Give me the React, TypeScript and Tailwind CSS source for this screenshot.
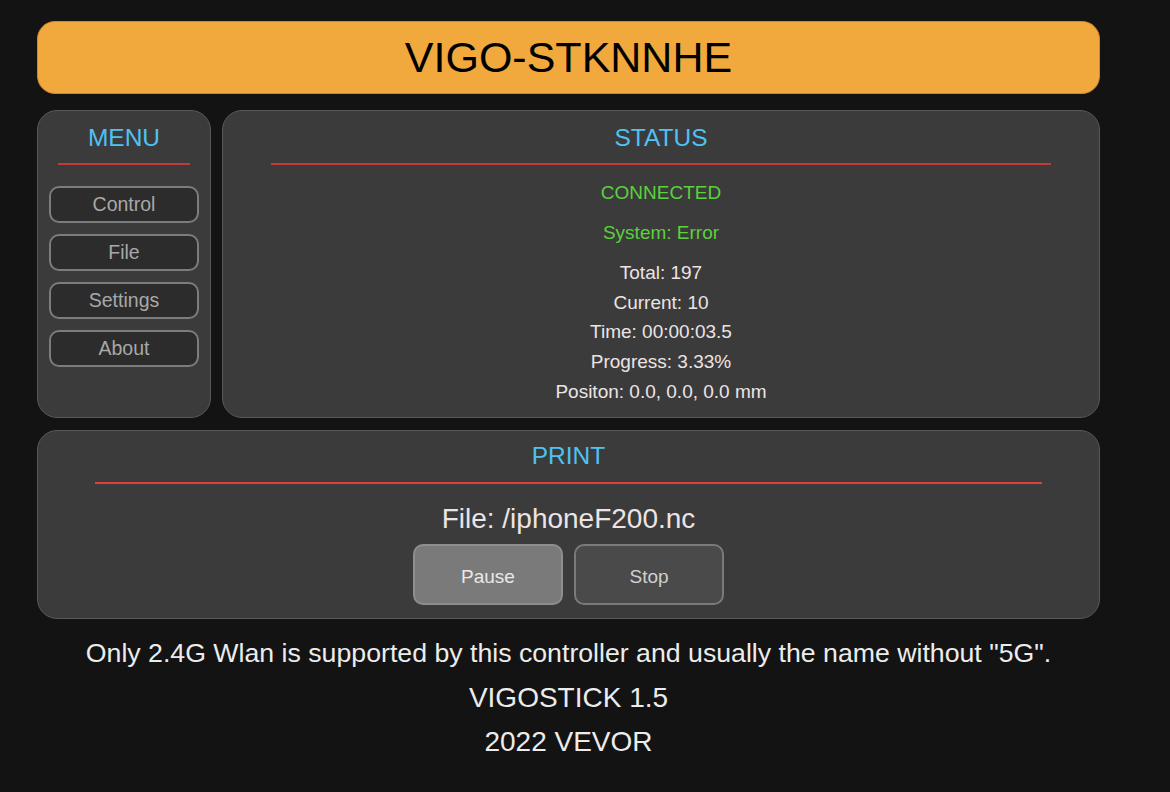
export default function App() {
  const menu = ["Control", "File", "Settings", "About"];
  const stats = [
    "Total: 197",
    "Current: 10",
    "Time: 00:00:03.5",
    "Progress: 3.33%",
    "Positon: 0.0, 0.0, 0.0 mm",
  ];

  return (
    <div className="w-full min-h-screen h-[792px] bg-[#131313] font-['Liberation_Sans',Arial,sans-serif] pt-[21px]">
      <div className="ml-[37px] w-[1063px] flex flex-col">
        <div className="h-[73px] rounded-[18px] bg-[#f1a83c] border border-[#c98a2c] flex items-center justify-center text-[43px] text-black">
          VIGO-STKNNHE
        </div>

        <div className="mt-[16px] flex gap-[11px] h-[308px]">
          <div className="w-[174px] rounded-[20px] bg-[#3b3b3b] border border-[#585858] flex flex-col">
            <div className="pt-[14px] text-center text-[24.5px] leading-[26px] text-[#4fc1f2]">
              MENU
            </div>
            <div className="mx-[20px] mt-[12px] h-[2px] bg-[#c23a36]" />
            <div className="mt-[21px] px-[11px] flex flex-col gap-[11px]">
              {menu.map((item, index) => {
                return (
                  <div
                    key={index}
                    className="h-[37px] rounded-[10px] border-2 border-[#7c7c7c] bg-[#2c2c2c] flex items-center justify-center pt-[1px] text-[19.5px] text-[#a8a8a8]"
                  >
                    {item}
                  </div>
                );
              })}
            </div>
          </div>

          <div className="flex-1 rounded-[20px] bg-[#3b3b3b] border border-[#585858] flex flex-col">
            <div className="pt-[14px] text-center text-[24.5px] leading-[26px] text-[#4fc1f2]">
              STATUS
            </div>
            <div className="mx-[48px] mt-[12px] h-[2px] bg-[#c23a36]" />
            <div className="mt-[18px] text-center text-[19px] leading-[20px] text-[#5bd13c]">
              CONNECTED
            </div>
            <div className="mt-[20px] text-center text-[19px] leading-[20px] text-[#5bd13c]">
              System: Error
            </div>
            <div className="mt-[15px] flex flex-col items-center text-[19px] leading-[29.7px] text-[#ece4e4]">
              {stats.map((item, index) => {
                return <div key={index}>{item}</div>;
              })}
            </div>
          </div>
        </div>

        <div className="mt-[12px] h-[189px] rounded-[20px] bg-[#3b3b3b] border border-[#585858] flex flex-col">
          <div className="pt-[12px] text-center text-[24.5px] leading-[26px] text-[#4fc1f2]">
            PRINT
          </div>
          <div className="mx-[57px] mt-[13px] h-[2px] bg-[#e0413b]" />
          <div className="mt-[20px] text-center text-[28px] leading-[30px] text-[#ece4e4]">
            File: /iphoneF200.nc
          </div>
          <div className="mt-[10px] flex justify-center gap-[11px]">
            <button className="w-[150px] h-[61px] rounded-[10px] bg-[#7a7a7a] border-2 border-[#8e8e8e] pt-[6px] text-[19px] text-[#e8e8e8]">
              Pause
            </button>
            <button className="w-[150px] h-[61px] rounded-[10px] bg-[#4a4a4a] border-2 border-[#7a7a7a] pt-[6px] text-[19px] text-[#d0d0d0]">
              Stop
            </button>
          </div>
        </div>

        <div className="mt-[12px] flex flex-col items-center leading-[44.5px] text-[#ececec]">
          <div className="text-[26.7px]">Only 2.4G Wlan is supported by this controller and usually the name without "5G".</div>
          <div className="text-[28px]">VIGOSTICK 1.5</div>
          <div className="text-[28px]">2022 VEVOR</div>
        </div>
      </div>
    </div>
  );
}
